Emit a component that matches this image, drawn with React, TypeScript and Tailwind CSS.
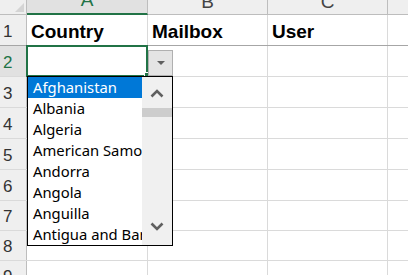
import React from 'react';

const rows = [
  { n: 1, h: 31, cells: ['Country', 'Mailbox', 'User'] },
  { n: 2, h: 31, cells: ['', '', ''] },
  { n: 3, h: 31, cells: ['', '', ''] },
  { n: 4, h: 31, cells: ['', '', ''] },
  { n: 5, h: 31, cells: ['', '', ''] },
  { n: 6, h: 31, cells: ['', '', ''] },
  { n: 7, h: 30, cells: ['', '', ''] },
  { n: 8, h: 30, cells: ['', '', ''] },
  { n: 9, h: 30, cells: ['', '', ''] },
];

const countries = [
  'Afghanistan',
  'Albania',
  'Algeria',
  'American Samoa',
  'Andorra',
  'Angola',
  'Anguilla',
  'Antigua and Barbuda',
];

const colWidths = ['w-[121px]', 'w-[120px]', 'w-[120px]'];

const App: React.FC = () => {
  return (
    <div className="relative w-[408px] h-[275px] overflow-hidden bg-white font-['Liberation_Sans',Arial,sans-serif]">
      {/* column headers */}
      <div className="flex h-[15px]">
        <div className="relative w-[27px] shrink-0 bg-[#efefef] border-r border-b border-[#bdbdbd]">
          <svg className="absolute right-[2px] bottom-[2px]" width="9" height="9" viewBox="0 0 9 9">
            <polygon points="9,0 9,9 0,9" fill="#d4d4d4" />
          </svg>
        </div>
        <div className="w-[121px] shrink-0 bg-[#e1e1e1] border-r border-[#bdbdbd] border-b-2 border-b-[#217346] overflow-hidden flex items-end justify-center">
          <span className="text-[19px] leading-[19px] text-[#217346] pb-[4px]">A</span>
        </div>
        <div className="w-[120px] shrink-0 bg-[#efefef] border-r border-b border-[#bdbdbd] overflow-hidden flex items-end justify-center">
          <span className="text-[19px] leading-[19px] text-[#444] pb-[3px]">B</span>
        </div>
        <div className="w-[120px] shrink-0 bg-[#efefef] border-r border-b border-[#bdbdbd] overflow-hidden flex items-end justify-center">
          <span className="text-[19px] leading-[19px] text-[#444] pb-[3px]">C</span>
        </div>
        <div className="flex-1 bg-[#efefef] border-b border-[#bdbdbd]" />
      </div>

      {/* grid rows */}
      {rows.map((row) => (
        <div
          key={row.n}
          className={`flex ${row.n === 1 ? 'border-b border-[#a6a6a6]' : 'border-b border-[#dadada]'}`}
          style={{ height: row.h }}
        >
          <div
            className={`w-[27px] shrink-0 border-r flex items-end pl-[3px] pb-[5px] text-[17px] leading-[17px] ${
              row.n === 2 ? 'bg-[#e1e1e1] border-[#217346] text-[#217346]' : 'bg-[#efefef] border-[#bdbdbd] text-[#333]'
            }`}
          >
            {row.n}
          </div>
          {row.cells.map((c, i) => (
            <div
              key={i}
              className={`${colWidths[i]} shrink-0 border-r border-[#dadada] flex items-end pl-[4px] pb-[4px]`}
            >
              <span className="text-[19px] leading-[19px] font-bold text-black whitespace-nowrap">{c}</span>
            </div>
          ))}
          <div className="flex-1" />
        </div>
      ))}

      {/* selection around A2 */}
      <div className="absolute left-[26px] top-[45px] w-[122px] h-[32px] border-2 border-[#217346]" />
      <div className="absolute left-[144px] top-[72px] w-[6px] h-[6px] bg-[#217346] border border-white" />

      {/* dropdown button */}
      <div className="absolute left-[148px] top-[50px] w-[25px] h-[26px] bg-[#e4e4e4] border border-[#b0b0b0] flex items-center justify-center">
        <svg width="8" height="4" viewBox="0 0 8 4">
          <polygon points="0,0 8,0 4,4" fill="#5f5f5f" />
        </svg>
      </div>

      {/* dropdown list */}
      <div className="absolute left-[27px] top-[76px] w-[146px] h-[170px] border border-black bg-white flex overflow-hidden font-['Noto_Sans',sans-serif]">
        <div className="w-[114px] shrink-0">
          {countries.map((c, i) => (
            <div
              key={c}
              className={`h-[21px] pl-[5px] text-[14.8px] leading-[21px] whitespace-nowrap overflow-hidden ${
                i === 0 ? 'bg-[#0078d7] text-white' : 'text-black'
              }`}
            >
              {c}
            </div>
          ))}
        </div>
        <div className="flex-1 bg-[#f0f0f0] flex flex-col">
          <div className="h-[31px] flex justify-center pt-[12px]">
            <svg width="14" height="9" viewBox="0 0 14 9">
              <polyline points="1.5,7.5 7,2 12.5,7.5" fill="none" stroke="#606060" strokeWidth="2.6" />
            </svg>
          </div>
          <div className="h-[9px] bg-[#cdcdcd]" />
          <div className="flex-1" />
          <div className="h-[30px] flex justify-center pt-[7px]">
            <svg width="14" height="9" viewBox="0 0 14 9">
              <polyline points="1.5,1.5 7,7 12.5,1.5" fill="none" stroke="#606060" strokeWidth="2.6" />
            </svg>
          </div>
        </div>
      </div>
    </div>
  );
};

export default App;
